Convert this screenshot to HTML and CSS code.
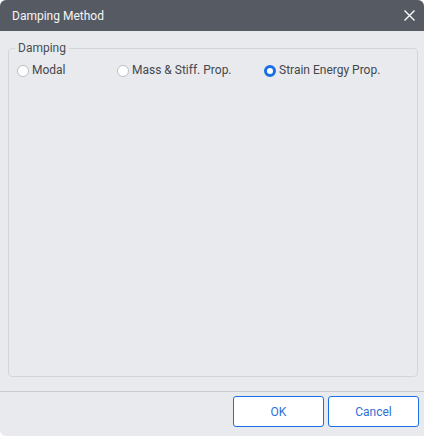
FILE: index.html
```html
<!DOCTYPE html>
<html>
<head>
<meta charset="utf-8">
<link rel="stylesheet" href="styles.css">
</head>
<body>
<div class="dialog">
  <div class="titlebar">
    <span class="title">Damping Method</span>
    <svg class="close" width="11" height="11" viewBox="0 0 11 11"><path d="M0.5 0.5 L10.5 10.5 M10.5 0.5 L0.5 10.5" stroke="#ffffff" stroke-width="1.3" fill="none"/></svg>
  </div>
  <div class="main">
    <fieldset class="group">
      <legend class="legend">Damping</legend>
      <div class="radios">
        <label class="opt"><span class="radio"></span><span>Modal</span></label>
        <label class="opt"><span class="radio"></span><span>Mass &amp; Stiff. Prop.</span></label>
        <label class="opt"><span class="radio checked"></span><span>Strain Energy Prop.</span></label>
      </div>
    </fieldset>
  </div>
  <div class="footer">
    <button class="btn">OK</button>
    <button class="btn">Cancel</button>
  </div>
</div>
</body>
</html>
```
FILE: styles.css
```css
html, body {
  margin: 0;
  padding: 0;
  background: #ffffff;
}
body {
  font-family: Roboto, "Liberation Sans", sans-serif;
  font-size: 12px;
  color: #44474c;
}
.dialog {
  width: 424px;
  height: 436px;
  background: #e9eaee;
  border-radius: 6px 6px 0 6px;
  overflow: hidden;
  display: flex;
  flex-direction: column;
  box-sizing: border-box;
}
.titlebar {
  height: 31px;
  flex: none;
  background: #565b63;
  display: flex;
  align-items: center;
  justify-content: space-between;
  padding: 0 9px 0 12px;
}
.title {
  color: #f4f5f7;
  font-size: 12px;
}
.close {
  display: block;
}
.main {
  flex: 1;
  display: flex;
  flex-direction: column;
  padding: 9px 6px 14px 8px;
  min-height: 0;
}
.group {
  flex: 1;
  margin: 0;
  min-width: 0;
  border: 1px solid #d3d5d9;
  border-radius: 4px;
  padding: 0 6px;
  box-sizing: border-box;
}
.legend {
  padding: 0 3px;
  line-height: 16px;
  color: #4a4d52;
}
.radios {
  display: grid;
  grid-template-columns: 100px 147px auto;
  margin-top: 7px;
  margin-left: 2px;
}
.opt {
  display: flex;
  align-items: center;
  gap: 3px;
  line-height: 15px;
  color: #44474c;
}
.radio {
  width: 12px;
  height: 12px;
  box-sizing: border-box;
  border-radius: 50%;
  border: 1px solid #bcc0c6;
  background: #ffffff;
  flex: none;
}
.radio.checked {
  border: 3.5px solid #1a6fe8;
}
.footer {
  flex: none;
  border-top: 1px solid #c9cbd0;
  padding: 4px 5px 9px 0;
  display: flex;
  justify-content: flex-end;
  gap: 4px;
}
.btn {
  width: 91px;
  height: 31px;
  box-sizing: border-box;
  background: #ffffff;
  border: 1px solid #1a6fe8;
  border-radius: 3px;
  color: #2f6fd8;
  font-family: Roboto, "Liberation Sans", sans-serif;
  font-size: 12px;
  padding: 0;
}
```
